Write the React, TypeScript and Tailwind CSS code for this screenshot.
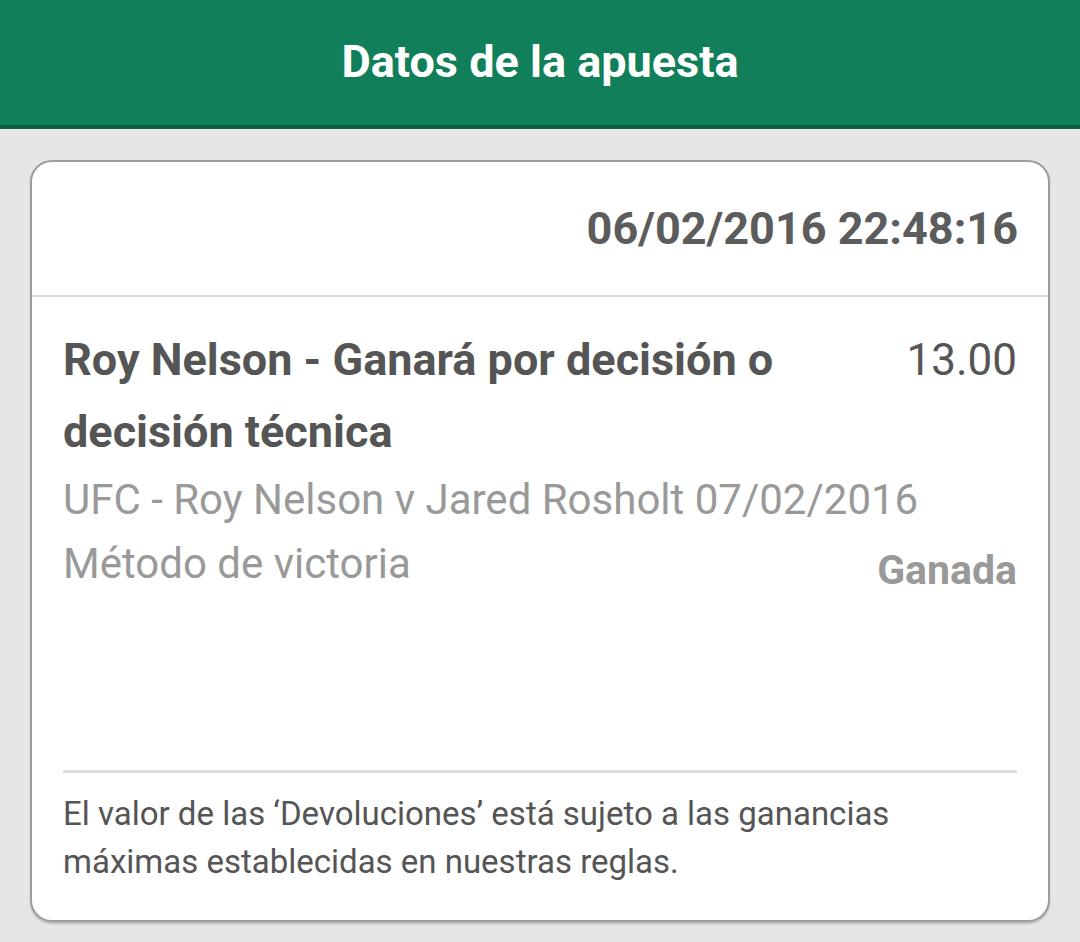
export default function App() {
    return (
        <div className="min-h-screen bg-[#e6e6e6] font-['Roboto',sans-serif]">
            <div className="h-[129px] bg-[#11805a] border-b-4 border-[#0c5f42] flex items-center justify-center">
                <h1 className="text-[45px] font-bold text-white leading-none -mt-[2px]">Datos de la apuesta</h1>
            </div>

            <div className="px-[30px] pt-[31px] pb-[20px]">
                <div className="bg-white border-2 border-[#9c9c9c] rounded-[22px] shadow-[0_2px_2px_rgba(0,0,0,0.2)]">
                    <div className="h-[135px] flex items-center justify-end px-[30px] border-b-2 border-[#dcdcdc]">
                        <span className="text-[45px] font-bold text-[#5c5c5c] leading-none">06/02/2016 22:48:16</span>
                    </div>

                    <div className="px-[31px] pt-[27px] pb-[34px]">
                        <div className="flex justify-between gap-8">
                            <p className="text-[45px] font-bold text-[#555] leading-[72px]">
                                Roy Nelson - Ganará por decisión o decisión técnica
                            </p>
                            <span className="shrink-0 text-[44px] text-[#555] leading-[72px]">13.00</span>
                        </div>
                        <p className="text-[42px] text-[#999] leading-[64px]">UFC - Roy Nelson v Jared Rosholt 07/02/2016</p>
                        <div className="flex justify-between items-start">
                            <span className="text-[42px] text-[#999] leading-[64px]">Método de victoria</span>
                            <span className="text-[41px] font-bold text-[#999] leading-[64px] pt-[6px]">Ganada</span>
                        </div>

                        <div className="mt-[168px] h-[3px] bg-[#dcdcdc]"/>

                        <p className="pt-[17px] text-[33px] text-[#555] leading-[48px]">
                            El valor de las ‘Devoluciones’ está sujeto a las ganancias
                            <br/>
                            máximas establecidas en nuestras reglas.
                        </p>
                    </div>
                </div>
            </div>
        </div>
    )
}
